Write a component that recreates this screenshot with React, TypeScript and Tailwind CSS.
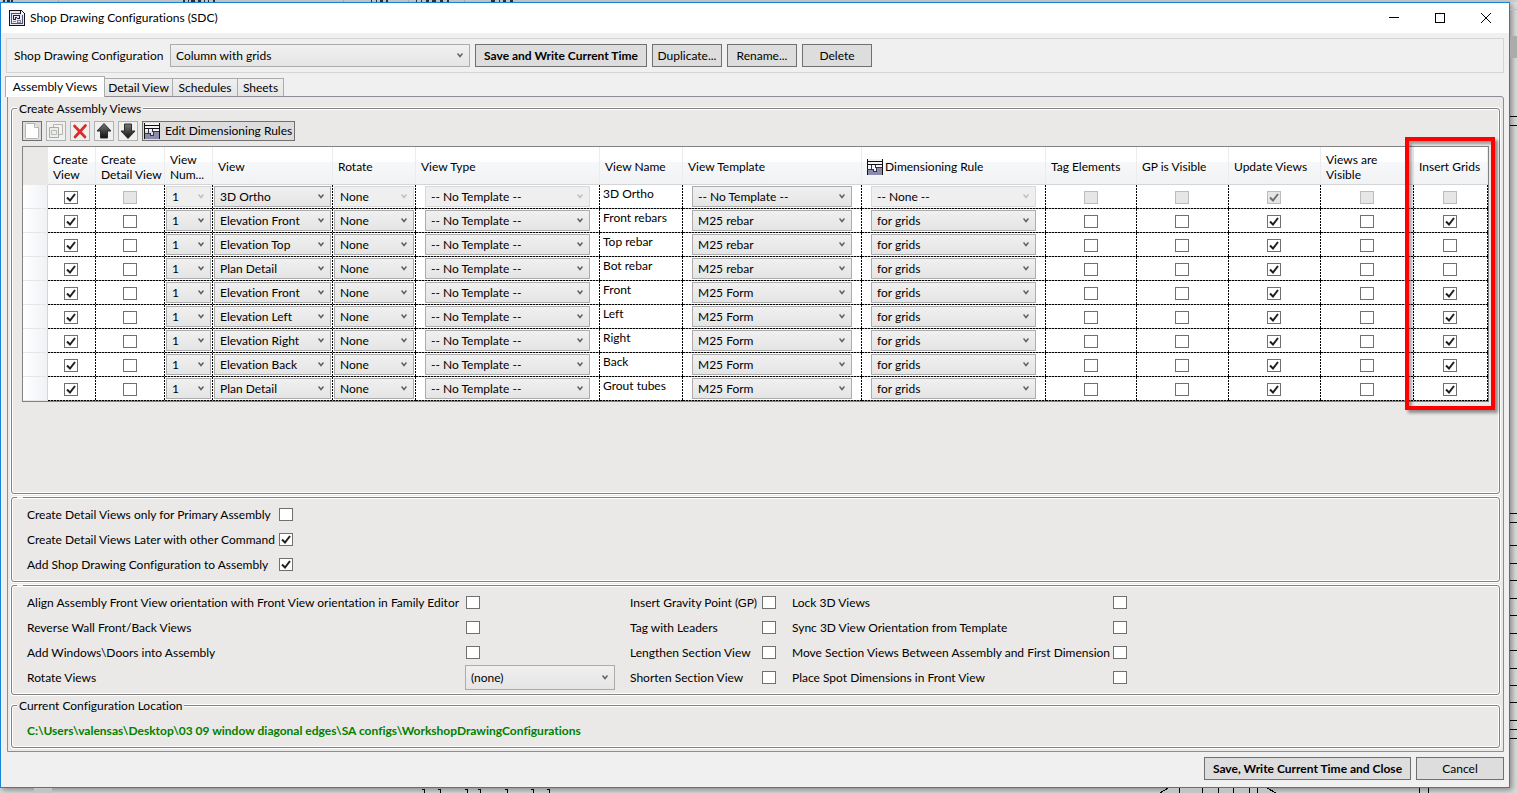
import React, { useState } from "react";

type Row = {
  view: string;
  name: string;
  template: string;
  grids: boolean;
  locked?: boolean;
};

const rows: Row[] = [
  { view: "3D Ortho", name: "3D Ortho", template: "-- No Template --", grids: false, locked: true },
  { view: "Elevation Front", name: "Front rebars", template: "M25 rebar", grids: true },
  { view: "Elevation Top", name: "Top rebar", template: "M25 rebar", grids: false },
  { view: "Plan Detail", name: "Bot rebar", template: "M25 rebar", grids: false },
  { view: "Elevation Front", name: "Front", template: "M25 Form", grids: true },
  { view: "Elevation Left", name: "Left", template: "M25 Form", grids: true },
  { view: "Elevation Right", name: "Right", template: "M25 Form", grids: true },
  { view: "Elevation Back", name: "Back", template: "M25 Form", grids: true },
  { view: "Plan Detail", name: "Grout tubes", template: "M25 Form", grids: true },
];

const RulesIcon = () => (
  <svg width="16" height="16" viewBox="0 0 16 16" className="shrink-0" shapeRendering="crispEdges">
    <path d="M1 0h14v8H1z" fill="#f4f4f4" />
    <path d="M1 16v-5h5v2h4V8h5v8z" fill="#8d8bab" />
    <path d="M0 2h16v1H0zM0 5h16v1H0zM0 0h1v16H0zM15 0h1v16h-1z" fill="#111" />
    <path d="M4 6h1v4H4zM8 6h1v3H8zM0 10h6v1H0zM6 10h1v3H6zM6 12h4v1H6zM9 8h1v5H9zM9 8h6v1H9z" fill="#34324f" />
  </svg>
);

const AppIcon = () => (
  <svg width="17" height="17" viewBox="0 0 17 17" className="shrink-0" shapeRendering="crispEdges">
    <path d="M0 0h12l4 4v12H0z" fill="#14141c" />
    <path d="M1 1h10v3h4v11H1z" fill="#e9e9f2" />
    <path d="M12 1l3 3h-3z" fill="#fff" />
    <path d="M2 3h9v1H2zM2 3h1v11H2zM2 13h12v1H2zM13 5h1v9h-1z" fill="#55536b" />
    <path d="M4 5h7v1H4zM4 5h1v5H4zM4 9h3v1H4zM6 7h1v3H6zM6 7h2v1H6zM10 5h1v4h-1zM8 8h3v1H8z" fill="#24233a" />
    <path d="M4 11h3v1H4zM8 10h4v3H8z" fill="#8583a0" />
    <path d="M9 11h2v1H9z" fill="#e9e9f2" />
  </svg>
);

const NewIcon = () => (
  <svg width="18" height="18" viewBox="0 0 18 18" className="shrink-0">
    <path d="M2.500 2.500q0-1 1-1h8l4 4v10q0 1-1 1h-11q-1 0-1-1z" fill="#fdfdfd" stroke="#b5b5b5" />
    <path d="M11.500 1.500v4h4" fill="#eee" stroke="#b5b5b5" />
  </svg>
);

const CopyIcon = () => (
  <svg width="18" height="18" viewBox="0 0 18 18" className="shrink-0">
    <path d="M6.500 2.500h9v10h-9z" fill="#f3f3f1" stroke="#b3b5b0" />
    <path d="M2.500 5.500h9v10h-9z" fill="#ecece9" stroke="#a8aaa5" />
    <path d="M4.500 8.500h5v4h-5z" fill="none" stroke="#b8bab5" />
  </svg>
);

const DeleteIcon = () => (
  <svg width="18" height="18" viewBox="0 0 18 18" className="shrink-0">
    <path d="M3.500 4L14 15M14.500 3.500L4 15" stroke="#dd2a2a" strokeWidth="2.700" strokeLinecap="round" />
  </svg>
);

const ArrowIcon = ({ down }: { down?: boolean }) => (
  <svg width="18" height="18" viewBox="0 0 18 18" className={down ? "shrink-0 rotate-180" : "shrink-0"}>
    <defs>
      <linearGradient id={down ? "arrowDown" : "arrowUp"} x1="0" y1="0" x2="0" y2="1">
        <stop offset="0" stopColor={down ? "#111" : "#777"} />
        <stop offset="1" stopColor={down ? "#777" : "#111"} />
      </linearGradient>
    </defs>
    <path
      d="M9 1.500L16 9H12.500V16H5.500V9H2z"
      fill={down ? "url(#arrowDown)" : "url(#arrowUp)"}
      stroke="#2c2c2c"
      strokeLinejoin="round"
    />
  </svg>
);

const Check = ({
  label,
  id,
  on = false,
  disabled = false,
  className = "",
}: {
  label?: string;
  id?: string;
  on?: boolean;
  disabled?: boolean;
  className?: string;
}) => {
  const [checked, setChecked] = useState(on);
  return (
    <span className={`relative inline-block h-[13px] w-[14px] shrink-0 ${className}`}>
      <input
        type="checkbox"
        id={id}
        aria-label={label}
        checked={checked}
        disabled={disabled}
        onChange={(e) => setChecked(e.target.checked)}
        className="block h-[13px] w-[14px] appearance-none border border-[#707070] bg-white disabled:border-[#bcbcbc] disabled:bg-[#e6e6e6]"
      />
      {checked && (
        <svg width="14" height="13" viewBox="0 0 14 13" className="pointer-events-none absolute inset-0">
          <path
            d="M3 6.500L6 9.500L11 3"
            fill="none"
            stroke={disabled ? "#707070" : "#1f1f1f"}
            strokeWidth="2"
          />
        </svg>
      )}
    </span>
  );
};

const Combo = ({
  label,
  id,
  value,
  disabled = false,
  className,
}: {
  label?: string;
  id?: string;
  value: string;
  disabled?: boolean;
  className: string;
}) => (
  <span className={`relative block ${className}`}>
    <select
      id={id}
      aria-label={label}
      disabled={disabled}
      className="block h-full w-full appearance-none rounded-none border border-[#acacac] bg-linear-to-b from-[#f0f0f0] to-[#e5e5e5] pl-[5px] pr-4 text-black disabled:border-[#d9d9d9] disabled:from-[#efefef] disabled:to-[#efefef] disabled:opacity-100"
    >
      <option>{value}</option>
    </select>
    <svg
      width="6"
      height="5"
      viewBox="0 0 6 5"
      className="pointer-events-none absolute right-[7px] top-1/2 -mt-[3px]"
    >
      <path d="M0.500 0.500L3 3.500L5.500 0.500" fill="none" stroke={disabled ? "#bfbfbf" : "#606060"} strokeWidth="1.500" />
    </svg>
  </span>
);

const Button = ({ children, className }: { children: React.ReactNode; className: string }) => (
  <button type="button" className={`h-[23px] whitespace-nowrap border border-[#707070] bg-[#dddddd] text-center ${className}`}>
    {children}
  </button>
);

const ToolButton = ({ label, primary, children }: { label: string; primary?: boolean; children: React.ReactNode }) => (
  <button
    type="button"
    aria-label={label}
    className={`flex h-5 w-5 items-center justify-center border ${
      primary ? "border-[#707070] bg-[#dddddd]" : "border-[#adb2b5] bg-[#f0f0ef]"
    }`}
  >
    {children}
  </button>
);

const Group = ({ title, className = "", children }: { title?: string; className?: string; children: React.ReactNode }) => (
  <fieldset
    className={`min-w-0 rounded-[3px] border border-[#828282] pl-[5px] shadow-[0_0_0_1px_#fff,inset_0_0_0_1px_#fff] ${className}`}
  >
    {title ? (
      <legend className="h-[15px] bg-[#eae9e7] px-[2px] leading-[15px]">{title}</legend>
    ) : (
      <legend className="h-px w-[6px] bg-[#eae9e7]" />
    )}
    {children}
  </fieldset>
);

const Option = ({ text, width, on }: { text: string; width: string; on?: boolean }) => {
  const id = text.replace(/\W+/g, "-").toLowerCase();
  return (
    <div className="flex h-[25px] items-center">
      <label htmlFor={id} className={`whitespace-nowrap ${width}`}>
        {text}
      </label>
      <Check id={id} on={on} />
    </div>
  );
};

// black dashes along the bottom and the right edge of a grid cell
const cell =
  "h-6 p-0 bg-white bg-[repeating-linear-gradient(90deg,#000_0_2px,#9a9a9a_2px_3px),repeating-linear-gradient(180deg,#000_0_2px,#fff_2px_3px)] bg-[size:100%_1px,1px_100%] bg-[position:0_100%,100%_0] bg-no-repeat";
const tick = "pr-[2px] text-center";
const combo = "h-[21px] mb-px";
const head =
  "h-[38px] border-b border-r border-b-[#d5d5d5] border-r-[#ececec] bg-[linear-gradient(180deg,#fff_0_40%,#f7f8fa_40%,#f1f2f4)] pl-[5px] pr-0 pt-[2px] pb-0 text-left align-middle font-normal leading-[15px]";

const TableRow = ({ row }: { row: Row }) => {
  const off = row.locked;
  return (
    <tr>
      <td className="h-6 border-b border-r border-b-[#e4e6e8] border-r-[#d3d6da] bg-linear-to-r from-white to-[#f0f2f5] p-0" />
      <td className={`${cell} ${tick}`}>
        <Check label={`Create view ${row.name}`} on className="align-middle" />
      </td>
      <td className={`${cell} ${tick}`}>
        <Check label={`Create detail view ${row.name}`} disabled={off} className="align-middle" />
      </td>
      <td className={`${cell} pl-px pr-[2px]`}>
        <Combo label="View number" value="1" disabled={off} className={combo} />
      </td>
      <td className={`${cell} pl-px pr-[2px]`}>
        <Combo label="View" value={row.view} className={combo} />
      </td>
      <td className={`${cell} pl-px pr-[2px]`}>
        <Combo label="Rotate" value="None" disabled={off} className={combo} />
      </td>
      <td className={`${cell} pl-[9px] pr-[10px]`}>
        <Combo label="View type" value="-- No Template --" disabled={off} className={combo} />
      </td>
      <td className={`${cell} pl-[3px] align-top leading-[18px]`}>{row.name}</td>
      <td className={`${cell} pl-[9px] pr-[10px]`}>
        <Combo label="View template" value={row.template} className={combo} />
      </td>
      <td className={`${cell} pl-[9px] pr-[10px]`}>
        <Combo label="Dimensioning rule" value={off ? "-- None --" : "for grids"} disabled={off} className={combo} />
      </td>
      <td className={`${cell} ${tick}`}>
        <Check label={`Tag elements ${row.name}`} disabled={off} className="align-middle" />
      </td>
      <td className={`${cell} ${tick}`}>
        <Check label={`GP is visible ${row.name}`} disabled={off} className="align-middle" />
      </td>
      <td className={`${cell} ${tick}`}>
        <Check label={`Update views ${row.name}`} on disabled={off} className="align-middle" />
      </td>
      <td className={`${cell} ${tick}`}>
        <Check label={`Views are visible ${row.name}`} disabled={off} className="align-middle" />
      </td>
      <td className={`${cell} ${tick}`}>
        <Check label={`Insert grids ${row.name}`} on={row.grids} disabled={off} className="align-middle" />
      </td>
    </tr>
  );
};

const ViewsTable = () => (
  <div className="relative mt-[5px] border border-[#828282]">
    <table className="w-full table-fixed border-separate border-spacing-0">
      <colgroup>
        <col className="w-[25px]" />
        <col className="w-[48px]" />
        <col className="w-[69px]" />
        <col className="w-[48px]" />
        <col className="w-[120px]" />
        <col className="w-[83px]" />
        <col className="w-[184px]" />
        <col className="w-[83px]" />
        <col className="w-[179px]" />
        <col className="w-[184px]" />
        <col className="w-[91px]" />
        <col className="w-[92px]" />
        <col className="w-[92px]" />
        <col className="w-[93px]" />
        <col className="w-[74px]" />
      </colgroup>
      <thead>
        <tr>
          <td className="bg-[#eae9e7]" />
          <th className={head}>
            Create
            <br />
            View
          </th>
          <th className={head}>
            Create
            <br />
            <span className="whitespace-nowrap">Detail View</span>
          </th>
          <th className={head}>View Num...</th>
          <th className={head}>View</th>
          <th className={head}>Rotate</th>
          <th className={head}>View Type</th>
          <th className={head}>View Name</th>
          <th className={head}>View Template</th>
          <th className={head}>
            <span className="flex items-center gap-[2px]">
              <RulesIcon />
              Dimensioning Rule
            </span>
          </th>
          <th className={head}>Tag Elements</th>
          <th className={head}>GP is Visible</th>
          <th className={head}>Update Views</th>
          <th className={head}>
            Views are
            <br />
            Visible
          </th>
          <th className={head}>Insert Grids</th>
        </tr>
      </thead>
      <tbody>
        {rows.map((row) => (
          <TableRow key={row.name} row={row} />
        ))}
      </tbody>
    </table>
    <div className="pointer-events-none absolute -bottom-[9px] -right-[7px] -top-[10px] w-[90px] border-4 border-[#ff0000] shadow-[3px_3px_3px_#00000066,inset_3px_3px_3px_#00000055]" />
  </div>
);

const tabs = [
  { text: "Detail View", width: "w-[69px]" },
  { text: "Schedules", width: "w-[66px]" },
  { text: "Sheets", width: "w-[47px]" },
];

// drawing lines of the CAD sheet that show past the right side of the dialog
const sheetLines = [116, 125, 513, 522, 545, 563, 580, 598, 615, 633, 650, 668, 685, 702, 720, 729, 738];

export default function App() {
  return (
    <div className="flex min-h-screen flex-col bg-[#dcdcdc] font-['Lato','Segoe_UI',sans-serif] text-[12px] leading-4 text-black [font-variant-ligatures:none]">
      <div className="flex h-[2px] items-end overflow-hidden bg-[#cfcfcf]">
        <svg width="560" height="2" viewBox="0 0 560 2" shapeRendering="crispEdges">
          <path
            d="M3 1h2M7 1h3M11 1h2M183 1h2M188 1h1M191 1h4M198 1h3M204 1h1M208 1h1M213 1h2M371 1h1M376 1h1M380 1h3M386 1h2M416 1h1M421 1h1M426 1h3M432 1h4M440 1h3M447 1h2M491 1h4M499 1h1M503 1h3M510 1h3"
            stroke="#333"
            strokeWidth="2"
            fill="none"
          />
          <path d="M58.500 0v2M343.500 0v2M408.500 0v2M464.500 0v2" stroke="#b5b5b5" />
        </svg>
      </div>

      <div className="flex flex-1">
        <main className="flex min-w-0 flex-1 flex-col border border-[#1883d7] bg-[#f0f0f0] shadow-[2px_2px_6px_#00000066]">
          <header className="flex h-[30px] items-center bg-white">
            <div className="flex flex-1 items-center gap-1 pl-2">
              <AppIcon />
              <h1>Shop Drawing Configurations (SDC)</h1>
            </div>
            <button type="button" aria-label="Minimize" className="flex h-full w-[46px] items-center justify-center">
              <svg width="10" height="10" shapeRendering="crispEdges">
                <path d="M0 4h10v1H0z" />
              </svg>
            </button>
            <button type="button" aria-label="Maximize" className="flex h-full w-[46px] items-center justify-center">
              <svg width="10" height="10" shapeRendering="crispEdges">
                <path d="M0.500 0.500h9v9h-9z" fill="none" stroke="#000" />
              </svg>
            </button>
            <button type="button" aria-label="Close" className="flex h-full w-[46px] items-center justify-center">
              <svg width="10" height="10">
                <path d="M0 0l10 10M10 0L0 10" stroke="#000" />
              </svg>
            </button>
          </header>

          <div className="mx-[5px] mt-[5px] flex items-center gap-[5px] border border-[#d5d5d5] py-[5px] pl-[7px]">
            <div className="flex items-center">
              <label htmlFor="config" className="w-[156px] whitespace-nowrap">
                Shop Drawing Configuration
              </label>
              <Combo id="config" value="Column with grids" className="h-[23px] w-[300px]" />
            </div>
            <Button className="w-[172px] font-bold">Save and Write Current Time</Button>
            <Button className="w-[70px]">Duplicate...</Button>
            <Button className="w-[70px]">Rename...</Button>
            <Button className="w-[70px]">Delete</Button>
          </div>

          <div role="tablist" className="ml-1 mt-[3px] flex items-end">
            <button
              type="button"
              role="tab"
              aria-selected="true"
              className="relative -mb-px h-[21px] w-[100px] border border-b-0 border-[#acacac] bg-white"
            >
              Assembly Views
            </button>
            {tabs.map((tab) => (
              <button
                key={tab.text}
                type="button"
                role="tab"
                aria-selected="false"
                className={`-ml-px h-[18px] border border-b-0 border-[#acacac] bg-linear-to-b from-[#f0f0f0] to-[#e5e5e5] ${tab.width}`}
              >
                {tab.text}
              </button>
            ))}
          </div>

          <section className="ml-[6px] mr-[5px] flex flex-1 flex-col gap-[3px] rounded-tr-[3px] border border-[#8c8e94] bg-[#eae9e7] px-[3px] pb-[3px] pt-1">
            <Group title="Create Assembly Views" className="flex-1">
              <div className="pl-[5px] pr-[10px] pt-[5px]">
                <div className="flex gap-1">
                  <ToolButton label="New" primary>
                    <NewIcon />
                  </ToolButton>
                  <ToolButton label="Copy">
                    <CopyIcon />
                  </ToolButton>
                  <ToolButton label="Delete row">
                    <DeleteIcon />
                  </ToolButton>
                  <ToolButton label="Move up">
                    <ArrowIcon />
                  </ToolButton>
                  <ToolButton label="Move down">
                    <ArrowIcon down />
                  </ToolButton>
                  <button
                    type="button"
                    className="flex h-5 w-[153px] items-center gap-[5px] whitespace-nowrap border border-[#707070] bg-[#dddddd] pl-px"
                  >
                    <RulesIcon />
                    Edit Dimensioning Rules
                  </button>
                </div>
                <ViewsTable />
              </div>
            </Group>

            <Group>
              <div className="py-1 pl-[10px]">
                <Option text="Create Detail Views only for Primary Assembly" width="w-[252px]" />
                <Option text="Create Detail Views Later with other Command" width="w-[252px]" on />
                <Option text="Add Shop Drawing Configuration to Assembly" width="w-[252px]" on />
              </div>
            </Group>

            <Group>
              <div className="flex py-1 pl-[10px]">
                <div className="w-[603px]">
                  <Option
                    text="Align Assembly Front View orientation with Front View orientation in Family Editor"
                    width="w-[439px]"
                  />
                  <Option text="Reverse Wall Front/Back Views" width="w-[439px]" />
                  <Option text={"Add Windows\\Doors into Assembly"} width="w-[439px]" />
                  <div className="flex h-[25px] items-center">
                    <label htmlFor="rotate-views" className="w-[438px]">
                      Rotate Views
                    </label>
                    <Combo id="rotate-views" value="(none)" className="h-[25px] w-[150px]" />
                  </div>
                </div>
                <div className="w-[162px]">
                  <Option text="Insert Gravity Point (GP)" width="w-[132px]" />
                  <Option text="Tag with Leaders" width="w-[132px]" />
                  <Option text="Lengthen Section View" width="w-[132px]" />
                  <Option text="Shorten Section View" width="w-[132px]" />
                </div>
                <div>
                  <Option text="Lock 3D Views" width="w-[321px]" />
                  <Option text="Sync 3D View Orientation from Template" width="w-[321px]" />
                  <Option text="Move Section Views Between Assembly and First Dimension" width="w-[321px]" />
                  <Option text="Place Spot Dimensions in Front View" width="w-[321px]" />
                </div>
              </div>
            </Group>

            <Group title="Current Configuration Location">
              <p className="pb-2 pl-[10px] pt-[10px] font-bold text-[#008000]">
                {"C:\\Users\\valensas\\Desktop\\03 09 window diagonal edges\\SA configs\\WorkshopDrawingConfigurations"}
              </p>
            </Group>
          </section>

          <footer className="flex justify-end gap-[5px] pb-[7px] pr-[5px] pt-[5px]">
            <Button className="w-[207px] font-bold">Save, Write Current Time and Close</Button>
            <Button className="w-[88px]">Cancel</Button>
          </footer>
        </main>

        <svg width="7" height="786" viewBox="1510 2 7 786" shapeRendering="crispEdges" className="shrink-0">
          <path d="M1510 9.500h7" stroke="#bdbdbd" />
          <path d="M1510 36h7v22h-7z" fill="#ababab" />
          <path d={sheetLines.map((y) => `M1510 ${y}.5h7`).join("")} stroke="#000" />
        </svg>
      </div>

      <div className="h-[5px] overflow-hidden">
        <svg width="1517" height="5" viewBox="0 788 1517 5" shapeRendering="crispEdges">
          <path d="M34 788h18v5H34zM1168 788h99l9 5h-116z" fill="#c4c4c4" />
          <path
            d="M422 789.500h2.500v4M438 789.500h2.500v4M465 789.500h2.500v4M478 789.500h2.500v4M505 789.500h2.500v4M531 789.500h2.500v4M547 789.500h2.500v4M1179.500 788v5M1202.500 788v5M1218.500 788v5M1233.500 788v5M1249.500 788v5M1257.500 788v5M1419.500 788v5M1428.500 788v5M1160 793l8-5M1267 788l9 5"
            fill="none"
            stroke="#000"
          />
        </svg>
      </div>
    </div>
  );
}
